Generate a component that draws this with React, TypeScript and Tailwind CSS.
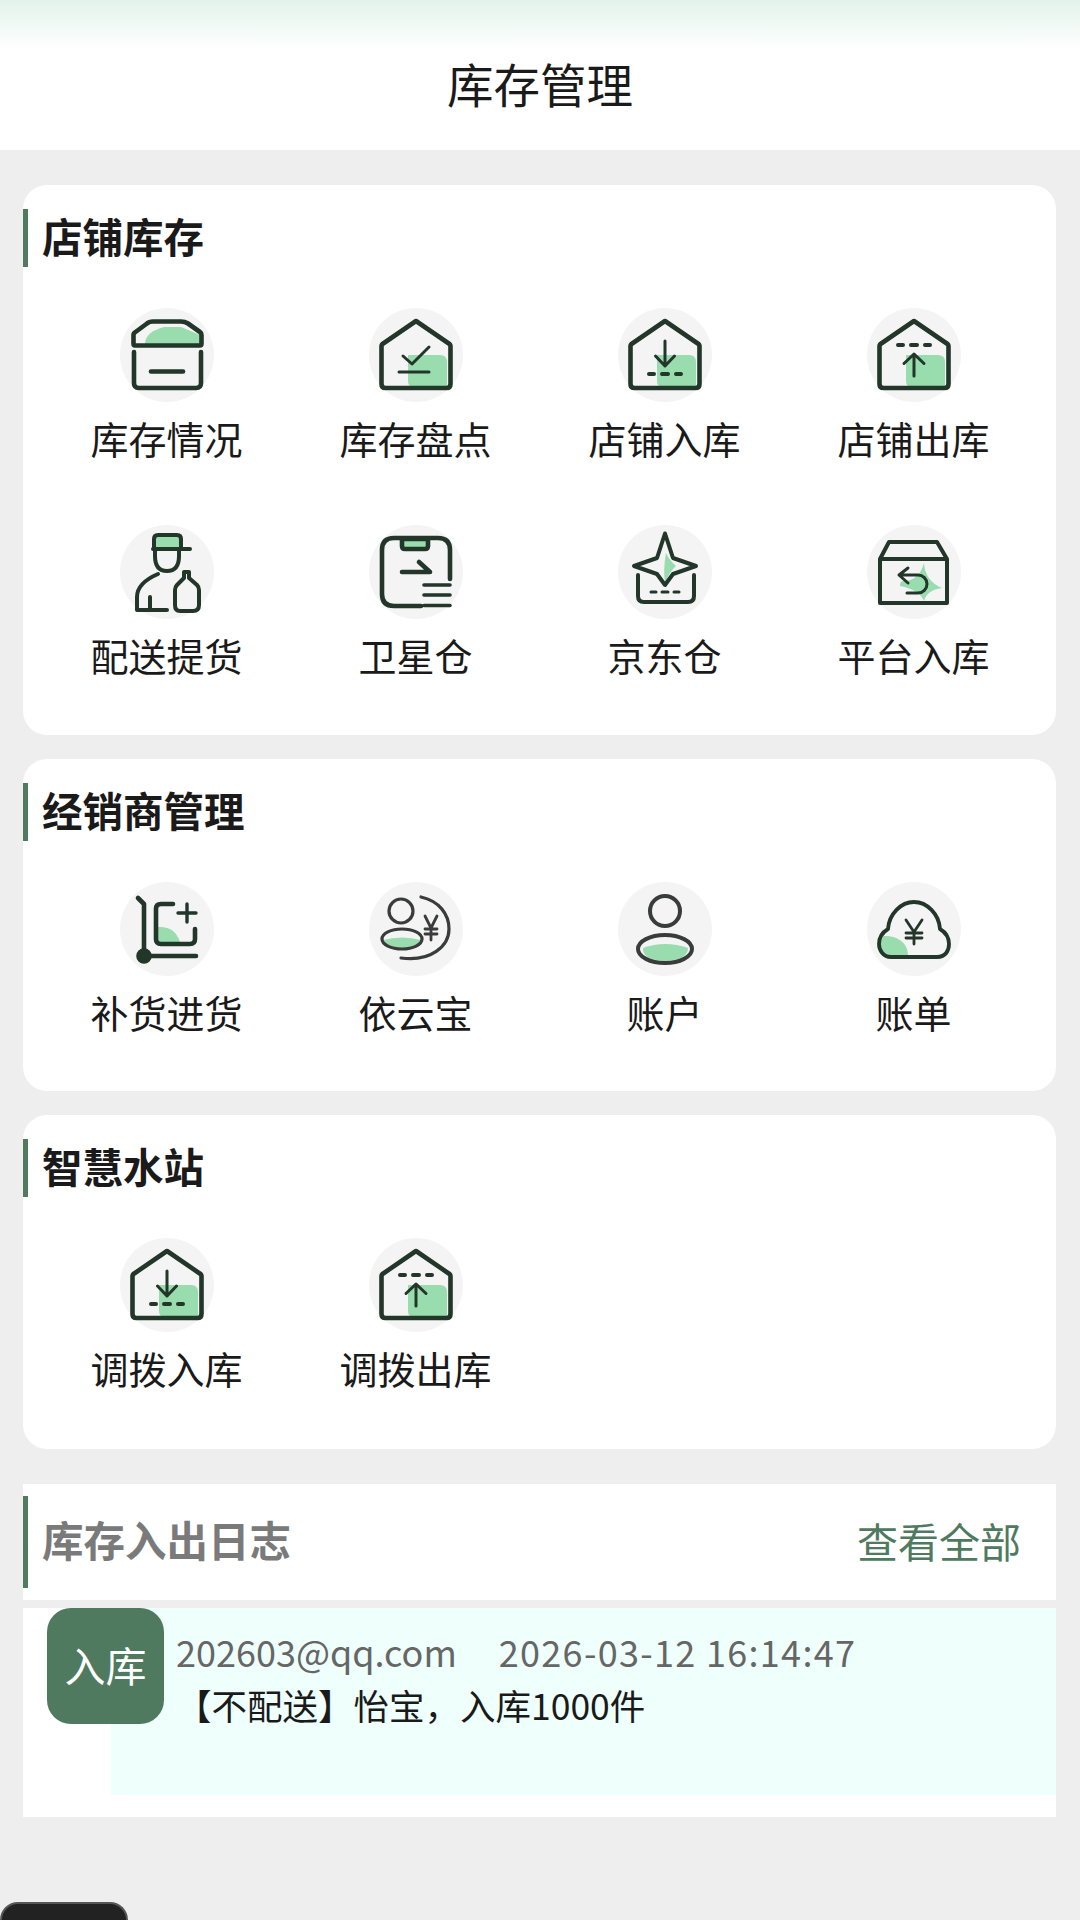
import React from "react";

const INK = "#22362a";
const GREEN = "#99dcae";

const Svg: React.FC<{ children: React.ReactNode; ink?: string; sw?: number }> = ({ children, ink = INK, sw = 4.6 }) => (
  <svg viewBox="0 0 94 94" className="w-[94px] h-[94px]">
    <circle cx="47" cy="47" r="47" fill="#f4f4f4" />
    <g fill="none" stroke={ink} strokeWidth={sw} strokeLinecap="round" strokeLinejoin="round">
      {children}
    </g>
  </svg>
);

const House = "M47 13 L13.500 36 Q12.500 37 12.500 38 V76 Q12.500 80 16.500 80 H77.500 Q81.500 80 81.500 76 V38 Q81.500 37 80.500 36 Z";

const BoxIcon = () => (
  <Svg>
    <path d="M25 36 C25 27 33 22 44 19 H61 L80 27 V36 Z" fill={GREEN} stroke="none" />
    <path d="M15 37.500 Q13.500 37.500 13.500 35.500 V27 Q13.500 25 15.500 24 L27 15.500 Q29 13.500 33 13.500 H61 Q65 13.500 68 15.500 L80 24 Q81.500 25 81.500 27 V35.500 Q81.500 37.500 80 37.500 Z" />
    <path d="M14 44 V75 Q14 80 19 80 H76 Q81 80 81 75 V44" />
    <path d="M31 63.500 H63" />
  </Svg>
);

const GreenBlock = () => <path d="M39 47 H71 Q78 47 78 54 V79 H45 Q39 79 39 73 Z" fill={GREEN} stroke="none" />;

const CheckHouse = () => (
  <Svg>
    <GreenBlock />
    <path d={House} />
    <path d="M34 48 L43 56 L60 39" strokeWidth="3" />
    <path d="M30 64 H60" strokeWidth="3" />
  </Svg>
);

const InHouse = () => (
  <Svg>
    <GreenBlock />
    <path d={House} />
    <path d="M47 33 V58 M37.500 48 L47 58 L56.500 48" strokeWidth="3" />
    <path d="M31 66 H36 M44 66 H50 M58 66 H63" strokeWidth="4" />
  </Svg>
);

const OutHouse = () => (
  <Svg>
    <GreenBlock />
    <path d={House} />
    <path d="M31 37 H36 M44 37 H50 M58 37 H63" strokeWidth="4" />
    <path d="M47 68 V46 M37 55.500 L47 46 L57 55.500" strokeWidth="3" />
  </Svg>
);

const PersonIcon = () => (
  <Svg sw={4}>
    <path d="M34 24 V14 Q34 10 38 10 H57 Q60 10 60 14 V24 Z" fill={GREEN} stroke="none" />
    <path d="M34 24 V14 Q34 10 38 10 H57 Q61 10 61 14 V24 M33 24 H70" />
    <path d="M35 25 V31 Q35 46 47 46 Q59 46 59 31 V25" />
    <path d="M38 49 Q17 58 17 72 V85 H47 M30 72 V85" />
    <path d="M64 47 H69 V53 L77 60 Q79 62 79 65 V80 Q79 86 73 86 H60 Q55 86 55 80 V65 Q55 62 57 60 L64 53 Z" />
  </Svg>
);

const ClipIcon = () => (
  <Svg>
    <path d="M33 14 H59 V21 Q59 24 56 24 H36 Q33 24 33 21 Z" fill={GREEN} />
    <path d="M81 54 V25 Q81 13 69 13 H25 Q13 13 13 25 V69 Q13 81 25 81 H52" />
    <path d="M33 47 H61 L50 37" />
    <path d="M55 60 H81 M55 70 H81 M55 80.500 H81" strokeWidth="3.600" />
  </Svg>
);

const StarIcon = () => (
  <Svg sw={4}>
    <path d="M48 28 Q52 36 58 41 Q52 46 47 58 Q45 44 48 28 Z" fill={GREEN} stroke="none" />
    <path d="M47 8.500 L55 33 L78 41 L55 49 L47 60 L39 49 L16 41 L39 33 Z" />
    <path d="M20 50 V71 Q20 77 26 77 H70 Q76 77 76 71 V50" />
    <path d="M33 67 H38 M44 67 H50 M56 67 H61" strokeWidth="3" />
  </Svg>
);

const ReturnBox = () => (
  <Svg sw={4}>
    <path d="M57 38 Q58 56 75 63 Q60 65 57 76 Q53 65 33 61 Q33 56 36 56 Q52 56 57 38 Z" fill={GREEN} stroke="none" />
    <path d="M13 78 V34 L22 17 H70 L80 34 V78 Z M13 34 H80" />
    <path d="M41 43 L32 50 L41 58 M32 50 H51 A9 9 0 0 1 51 68 H40" strokeWidth="3" />
  </Svg>
);

const CartIcon = () => (
  <Svg>
    <path d="M38 45 Q55 44 60 60 H38 Z" fill={GREEN} stroke="none" />
    <path d="M18 16 L24 22 V74 H76" />
    <circle cx="24" cy="74" r="5.500" fill={INK} />
    <path d="M53 22 H41 Q36 22 36 27 V57 Q36 62 41 62 H70 Q75 62 75 57 V47" />
    <path d="M58 31 H76 M67 22 V40" strokeWidth="3.400" />
  </Svg>
);

const YenPath = ({ x, y, w }: { x: number; y: number; w: number }) => (
  <path d={`M${x - w} ${y - 12} L${x} ${y} L${x + w} ${y - 12} M${x - w} ${y + 1} H${x + w} M${x - w} ${y + 6} H${x + w} M${x} ${y} V${y + 12}`} strokeWidth="2.800" />
);

const WalletIcon = () => (
  <Svg ink="#3a3c3b" sw={3.200}>
    <path d="M14 58 Q33 53 52 58 Q48 66 33 66 Q18 66 14 58 Z" fill={GREEN} stroke="none" />
    <circle cx="32" cy="29" r="12" />
    <ellipse cx="33" cy="57" rx="20" ry="10" />
    <path d="M52 15 C70 19 80 32 80 47 C80 64 62 80 32 76" />
    <YenPath x={62} y={46} w={6} />
  </Svg>
);

const AccountIcon = () => (
  <Svg ink="#3a3c3b" sw={4}>
    <path d="M25 66 Q47 58 70 66 Q70 78 47 79 Q24 78 25 66 Z" fill={GREEN} stroke="none" />
    <circle cx="47" cy="29" r="15" />
    <ellipse cx="47" cy="67" rx="27" ry="14" />
  </Svg>
);

const CloudIcon = () => (
  <Svg sw={3.800}>
    <path d="M15 54 C30 53 41 60 41 74 H24 C17 74 13 68 13 62 Q13 57 15 54 Z" fill={GREEN} stroke="none" />
    <path d="M24 75 H70 C79 75 82 68 82 62 C82 55 78 50 73 47 C72 32 60 20 47 20 C34 20 22 32 21 47 C16 50 12 55 12 62 C12 68 16 75 24 75 Z" />
    <YenPath x={47} y={50} w={8} />
  </Svg>
);

type Item = { label: string; icon: React.ReactNode };

const sections: { title: string; items: Item[]; cls: string }[] = [
  {
    title: "店铺库存",
    cls: "pb-[55px]",
    items: [
      { label: "库存情况", icon: <BoxIcon /> },
      { label: "库存盘点", icon: <CheckHouse /> },
      { label: "店铺入库", icon: <InHouse /> },
      { label: "店铺出库", icon: <OutHouse /> },
      { label: "配送提货", icon: <PersonIcon /> },
      { label: "卫星仓", icon: <ClipIcon /> },
      { label: "京东仓", icon: <StarIcon /> },
      { label: "平台入库", icon: <ReturnBox /> },
    ],
  },
  {
    title: "经销商管理",
    cls: "pb-[54px]",
    items: [
      { label: "补货进货", icon: <CartIcon /> },
      { label: "依云宝", icon: <WalletIcon /> },
      { label: "账户", icon: <AccountIcon /> },
      { label: "账单", icon: <CloudIcon /> },
    ],
  },
  {
    title: "智慧水站",
    cls: "pb-[56px]",
    items: [
      { label: "调拨入库", icon: <InHouse /> },
      { label: "调拨出库", icon: <OutHouse /> },
    ],
  },
];

const App: React.FC = () => {
  return (
    <div className="relative h-[1920px] overflow-hidden bg-[#eeeeee] font-['Noto_Sans_CJK_SC','Noto_Sans',sans-serif]">
      <header className="h-[150px] pt-[17px] flex items-center justify-center bg-[linear-gradient(to_bottom,#e2f3eb_0px,#ffffff_50px)]">
        <h1 className="text-[46.5px] leading-none text-[#1a1a1a]">库存管理</h1>
      </header>

      <main className="pl-[23px] pr-[24px] pt-[35px]">
        {sections.map((s) => (
          <section key={s.title} className={`bg-white rounded-[24px] mb-[24px] pt-[24px] ${s.cls}`}>
            <div className="h-[58px] flex items-center border-l-[5px] border-[#4f7a5f] pl-[14px] pb-[4px] mb-[41px]">
              <h2 className="text-[40.5px] leading-none font-bold text-[#1a1a1a]">{s.title}</h2>
            </div>
            <div className="grid grid-cols-4 gap-y-[62px] pl-[19px] pr-[18px]">
              {s.items.map((item) => (
                <div key={item.label} className="flex flex-col items-center">
                  {item.icon}
                  <p className="mt-[17px] mb-[6px] text-[38px] leading-[38px] text-[#1a1a1a]">{item.label}</p>
                </div>
              ))}
            </div>
          </section>
        ))}

        <div className="mt-[35px] h-[116px] bg-white flex items-center">
          <div className="h-[92px] flex items-center border-l-[5px] border-[#4f7a5f] pl-[14px] pb-[4px]">
            <h2 className="text-[41.5px] leading-none font-bold text-[#7a7a7a]">库存入出日志</h2>
          </div>
          <span className="ml-auto mr-[35px] pb-[4px] text-[41px] leading-none text-[#4f7a5f]">查看全部</span>
        </div>

        <div className="relative mt-[8px] h-[209px] bg-white">
          <div className="ml-[88px] h-[187px] bg-[#effffc] pl-[65px] pt-[20px]">
            <p className="flex text-[36px] leading-[46px] text-[#666666] whitespace-pre">
              <span>202603@qq.com</span>
              <span className="ml-[42px] tracking-[1.3px]">2026-03-12 16:14:47</span>
            </p>
            <p className="mt-[8px] text-[35.5px] leading-[46px] text-[#1a1a1a] whitespace-pre">【不配送】怡宝，入库1000件</p>
          </div>
          <div className="absolute left-[24px] top-0 w-[117px] h-[116px] pb-[4px] rounded-[24px] bg-[#4f7a5f] flex items-center justify-center text-white text-[41px] leading-none">
            入库
          </div>
        </div>
      </main>

      <div className="absolute left-0 bottom-0 w-[128px] h-[18px] rounded-t-[28px] bg-[#222222] border-t-2 border-x-2 border-[#555555]" />
    </div>
  );
};

export default App;
